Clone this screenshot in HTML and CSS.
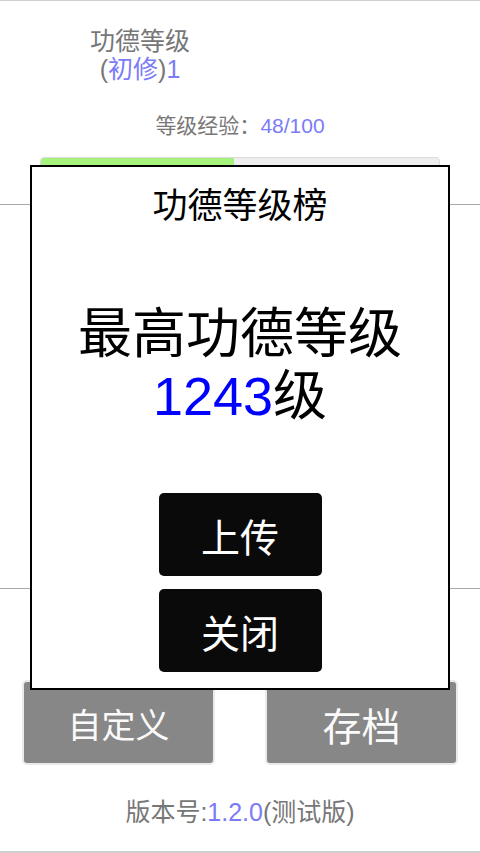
FILE: index.html
```html
<!DOCTYPE html>
<html lang="zh-CN">
<head>
<meta charset="utf-8">
<title>功德等级榜</title>
<link rel="stylesheet" href="styles.css">
</head>
<body>
<div class="page">
  <div class="rank">
    <div class="rank-line">功德等级</div>
    <div class="rank-line">(<span class="hl">初修</span>)<span class="hl">1</span></div>
  </div>
  <div class="exp">等级经验：<span class="hl">48/100</span></div>
  <div class="bar"><div class="bar-fill" style="width:48.5%"></div></div>
  <div class="rule rule-top"></div>
  <div class="rule rule-bottom"></div>
  <div class="actions">
    <div class="gbtn gbtn-small">自定义</div>
    <div class="gbtn gbtn-big">存档</div>
  </div>
  <div class="version">版本号:<span class="hl">1.2.0</span>(测试版)</div>

  <div class="modal">
    <div class="modal-title">功德等级榜</div>
    <div class="modal-main">
      <div>最高功德等级</div>
      <div><span class="blue">1243</span>级</div>
    </div>
    <div class="modal-btns">
      <div class="bbtn">上传</div>
      <div class="bbtn">关闭</div>
    </div>
  </div>
</div>
</body>
</html>
```
FILE: styles.css
```css
* { box-sizing: border-box; }
html, body { margin: 0; padding: 0; background: #fff; }
body {
  font-family: "Liberation Sans", "Noto Sans CJK SC", sans-serif;
  color: #777;
}
.page {
  position: relative;
  width: 480px;
  height: 853px;
  border-top: 1px solid #cfcfcf;
  border-bottom: 2px solid #cfcfcf;
  display: flex;
  flex-direction: column;
}
.hl { color: #7b7bf7; }
.blue { color: #0000ff; }

.rank {
  width: 280px;
  padding-top: 26px;
  text-align: center;
  font-size: 25px;
  line-height: 28px;
}
.exp {
  margin-top: 31px;
  text-align: center;
  font-size: 21px;
  line-height: 24px;
}
.bar {
  margin: 19px 40px 0 40px;
  height: 16px;
  border: 1px solid #dcdcdc;
  border-radius: 4px;
  background: #eeeeee;
  overflow: hidden;
}
.bar-fill {
  height: 100%;
  background: #a6f27c;
}
.rule {
  height: 1px;
  background: #a8a8a8;
}
.rule-top { margin-top: 31px; }
.rule-bottom { margin-top: 383px; }

.actions {
  margin-top: 91px;
  display: flex;
  justify-content: space-between;
  padding: 0 22px;
}
.gbtn {
  width: 193px;
  height: 85px;
  background: #878787;
  border: 2px solid #e9e9e9;
  border-radius: 5px;
  color: #fafafa;
  display: flex;
  align-items: center;
  justify-content: center;
  padding-top: 2px;
}
.gbtn-small { font-size: 34px; }
.gbtn-big { font-size: 39px; }

.version {
  margin-top: 32px;
  text-align: center;
  font-size: 25px;
  line-height: 30px;
}

.modal {
  position: absolute;
  top: 164px;
  left: 30px;
  width: 420px;
  height: 525px;
  border: 2px solid #000;
  background: #fff;
  color: #000;
  display: flex;
  flex-direction: column;
  align-items: center;
  padding-top: 19px;
}
.modal-title {
  font-size: 35px;
  line-height: 40px;
}
.modal-main {
  margin-top: 77px;
  font-size: 54px;
  line-height: 62px;
  text-align: center;
}
.modal-btns {
  margin-top: 66px;
  display: flex;
  flex-direction: column;
  gap: 13px;
}
.bbtn {
  width: 163px;
  height: 83px;
  background: #0a0a0a;
  border-radius: 5px;
  color: #fff;
  font-size: 39px;
  display: flex;
  align-items: center;
  justify-content: center;
}
```
